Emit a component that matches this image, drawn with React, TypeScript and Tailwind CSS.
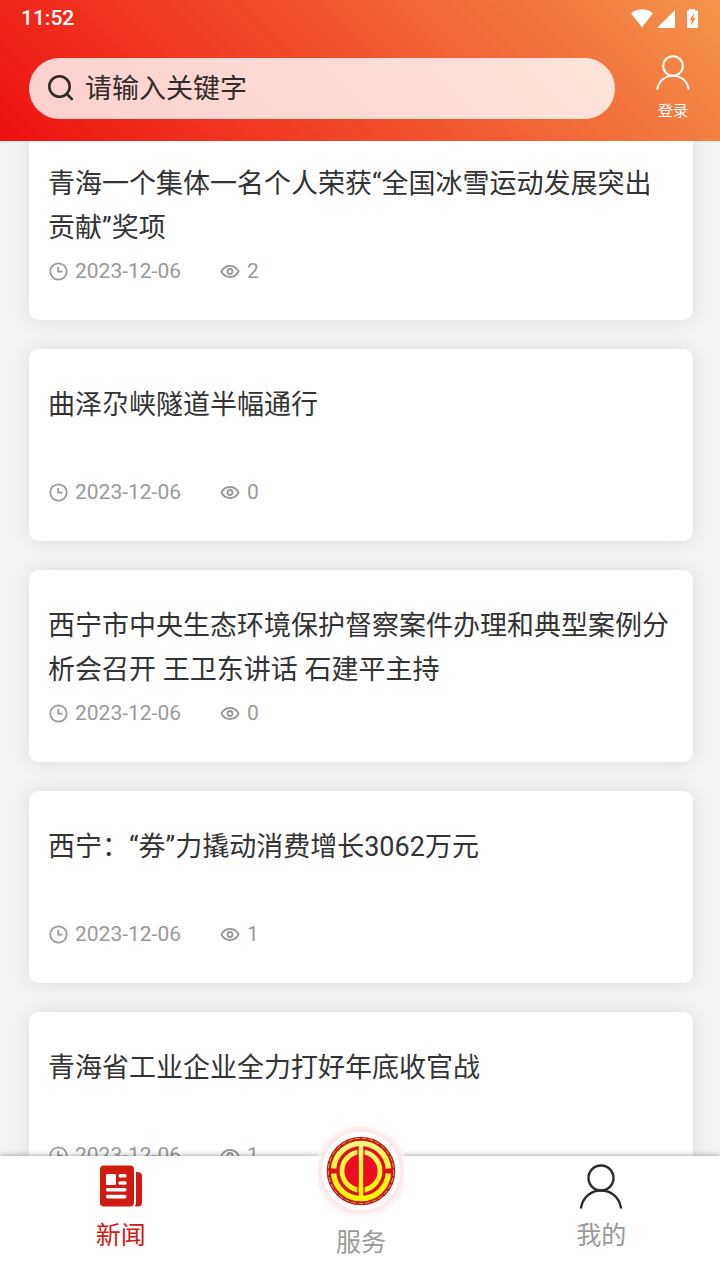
type Article = { title: string; date: string; views: number };

const articles: Article[] = [
  { title: '青海一个集体一名个人荣获“全国冰雪运动发展突出贡献”奖项', date: '2023-12-06', views: 2 },
  { title: '曲泽尕峡隧道半幅通行', date: '2023-12-06', views: 0 },
  { title: '西宁市中央生态环境保护督察案件办理和典型案例分析会召开 王卫东讲话 石建平主持', date: '2023-12-06', views: 0 },
  { title: '西宁：“券”力撬动消费增长3062万元', date: '2023-12-06', views: 1 },
  { title: '青海省工业企业全力打好年底收官战', date: '2023-12-06', views: 1 },
];

function StatusIcons() {
  return (
    <svg className="h-5 w-[68px]" viewBox="0 0 68 20" fill="#fff" aria-hidden="true">
      <path d="M0 4.2C6.5-1 15.500-1 22 4.200L11 18.500Z" />
      <path d="M44 1V19H26Z" />
      <path
        fillRule="evenodd"
        d="M58 1.500V0H64V1.500H66Q67 1.500 67 2.500V18Q67 19 66 19H57Q56 19 56 18V2.500Q56 1.500 57 1.500ZM63.200 4L58.600 11.200H60.800L60 17L64.600 9H62.200Z"
      />
    </svg>
  );
}

function SearchIcon() {
  return (
    <svg className="size-7 shrink-0" viewBox="0 0 28 28" fill="none" stroke="#332a2a" strokeWidth="2.600" strokeLinecap="round" aria-hidden="true">
      <circle cx="12.500" cy="12.500" r="10.200" />
      <path d="M19.800 20L24.800 25" />
    </svg>
  );
}

function UserIcon({ className, width }: { className: string; width: number }) {
  return (
    <svg className={className} viewBox="0 0 44 46" fill="none" stroke="currentColor" strokeWidth={width} strokeLinecap="round" aria-hidden="true">
      <circle cx="22" cy="14" r="12.500" />
      <path d="M2 43.500C4 33 12 26.500 22 26.500S40 33 42 43.500" />
    </svg>
  );
}

function ClockIcon() {
  return (
    <svg className="size-5 shrink-0" viewBox="0 0 20 20" fill="none" stroke="currentColor" strokeWidth="1.800" aria-hidden="true">
      <circle cx="10.500" cy="9.500" r="8.200" />
      <path d="M10.200 5V9.700H14.500" />
    </svg>
  );
}

function EyeIcon() {
  return (
    <svg className="size-5 shrink-0" viewBox="0 0 20 20" fill="none" stroke="currentColor" strokeWidth="1.800" aria-hidden="true">
      <path d="M1.400 9.500C3.500 5.500 6.500 4 10 4S16.500 5.500 18.600 9.500C16.500 13.500 13.500 15 10 15S3.500 13.500 1.400 9.500Z" />
      <circle cx="10" cy="9.500" r="2.500" />
    </svg>
  );
}

function NewsIcon() {
  return (
    <svg className="h-[42px] w-11" viewBox="0 0 44 42" aria-hidden="true">
      <rect x="1" y="0.500" width="34" height="41" rx="4" fill="#d11a10" />
      <path d="M37 7H39Q43 7.500 43 11V37Q43 41.500 39 41.500H35.500Q37 40 37 38Z" fill="#d11a10" />
      <g fill="#fff">
        <rect x="7" y="9" width="10" height="11" rx="1" />
        <rect x="19.500" y="9" width="8" height="3.400" rx="1.500" />
        <rect x="19.500" y="16.300" width="8" height="3.400" rx="1.500" />
        <rect x="7" y="23" width="20.500" height="3.600" rx="1.600" />
        <rect x="7" y="29.800" width="20.500" height="3.600" rx="1.600" />
      </g>
    </svg>
  );
}

function UnionEmblem() {
  return (
    <svg className="h-[90px] w-[86px]" viewBox="0 0 86 90" aria-hidden="true">
      <defs>
        <radialGradient id="halo" gradientUnits="userSpaceOnUse" cx="43" cy="45" r="50">
          <stop offset="0.76" stopColor="#fbdfe2" />
          <stop offset="0.88" stopColor="#fdeff0" stopOpacity="0.8" />
          <stop offset="1" stopColor="#fff" stopOpacity="0" />
        </radialGradient>
        <linearGradient id="gold" gradientUnits="userSpaceOnUse" x1="0" y1="14" x2="0" y2="76">
          <stop offset="0" stopColor="#fff68a" />
          <stop offset="0.6" stopColor="#fff325" />
          <stop offset="1" stopColor="#fff500" />
        </linearGradient>
      </defs>
      <rect width="86" height="90" fill="url(#halo)" />
      <circle cx="43" cy="45" r="39.500" fill="#fff" />
      <circle cx="43" cy="45" r="34.300" fill="#b51c14" />
      <circle cx="43" cy="45" r="32.600" fill="none" stroke="#e0a83c" strokeWidth="1" strokeDasharray="5 2" />
      <circle cx="43" cy="45" r="31.500" fill="#dc1218" />
      <g fill="none" stroke="url(#gold)">
        <path d="M15.600 42.500A27.500 27.500 0 0 1 70.400 42.500" strokeWidth="5.400" />
        <path d="M15.600 47.500A27.500 27.500 0 0 0 70.400 47.500" strokeWidth="5.400" />
        <circle cx="43" cy="45" r="18.900" strokeWidth="5" />
      </g>
      <circle cx="43" cy="45" r="16.400" fill="#ee0b24" />
      <path d="M40 21V69M46 21V69" stroke="#dc1218" strokeWidth="1.400" />
      <rect x="40.800" y="17" width="4.400" height="56" fill="url(#gold)" />
    </svg>
  );
}

function ArticleCard({ article }: { article: Article }) {
  return (
    <li>
      <a href="#article" className="block rounded-[10px] bg-white px-[19px] pt-[34px] pb-[26px] shadow-[0_0_20px_rgba(0,0,0,0.09)]">
        <h2 className="min-h-[88px] text-[27px] leading-[44px] text-[#333]">{article.title}</h2>
        <div className="flex h-11 items-center text-[21px] text-[#999]">
          <span className="flex items-center gap-[7px]">
            <ClockIcon />
            <time dateTime={article.date}>{article.date}</time>
          </span>
          <span className="ml-[39px] flex items-center gap-[7px]">
            <EyeIcon />
            {article.views}
          </span>
        </div>
      </a>
    </li>
  );
}

export default function App() {
  return (
    <div className="flex h-screen flex-col overflow-hidden bg-[#f3f3f3] font-[Roboto,'Noto_Sans_CJK_SC',sans-serif]">
      <header className="shrink-0 bg-[linear-gradient(45deg,#ee1010,#f4944c)] pb-5 text-white">
        <div className="flex h-[38px] items-center justify-between px-[21px] text-[21px] font-medium">
          <span>11:52</span>
          <StatusIcons />
        </div>
        <div className="flex items-center pt-[17px] pr-[29px] pl-[29px]">
          <label className="flex h-[61px] min-w-0 flex-1 items-center gap-[10px] rounded-full bg-white/80 pl-[18px]">
            <SearchIcon />
            <input
              type="search"
              aria-label="请输入关键字"
              placeholder="请输入关键字"
              className="h-10 min-w-0 flex-1 bg-transparent pt-[2px] text-[27px] text-[#332a2a] outline-none placeholder:text-[#332a2a]"
            />
          </label>
          <button type="button" className="ml-10 flex flex-col items-center gap-[10px] text-[15px] leading-5">
            <UserIcon className="h-9 w-9" width={2.6} />
            登录
          </button>
        </div>
      </header>

      <main className="min-h-0 flex-1 overflow-hidden pr-[27px] pl-[29px]">
        <ul className="-mt-[13px] flex flex-col gap-[29px]">
          {articles.map((article) => (
            <ArticleCard key={article.title} article={article} />
          ))}
        </ul>
      </main>

      <nav className="relative grid h-[124px] shrink-0 grid-cols-3 gap-[3px] bg-white pl-[2px] text-[25px] leading-9 text-[#999] shadow-[0_0_6px_rgba(0,0,0,0.4)]">
        <a href="#news" className="flex flex-col items-center gap-[11px] pt-[9px] text-[#d11a10]">
          <NewsIcon />
          新闻
        </a>
        <a href="#service" className="-mt-[30px] flex flex-col items-center gap-[9px]">
          <UnionEmblem />
          服务
        </a>
        <a href="#mine" className="flex flex-col items-center gap-2 pt-2">
          <UserIcon className="h-[46px] w-11 text-[#2b2b2b]" width={2.4} />
          我的
        </a>
      </nav>
    </div>
  );
}
